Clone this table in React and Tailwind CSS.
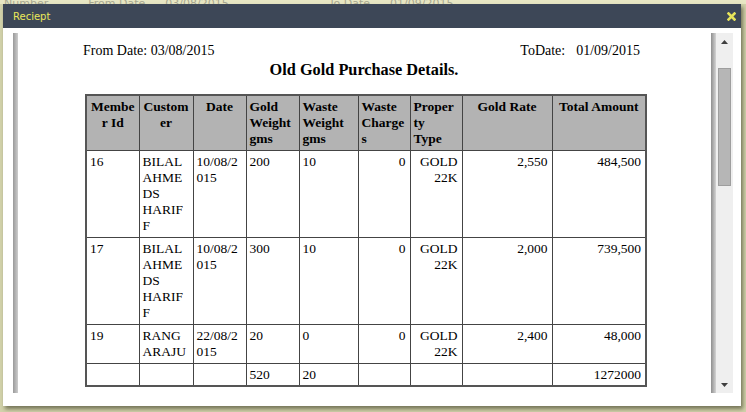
const headers = [
  { label: "Membe\nr Id", align: "text-center" },
  { label: "Custom\ner", align: "text-center" },
  { label: "Date", align: "text-center" },
  { label: "Gold\nWeight\ngms", align: "text-left" },
  { label: "Waste\nWeight\ngms", align: "text-left" },
  { label: "Waste\nCharge\ns", align: "text-left" },
  { label: "Proper\nty\nType", align: "text-left" },
  { label: "Gold Rate", align: "text-center" },
  { label: "Total Amount", align: "text-center" },
];

const colWidths = ["w-[53px]", "w-[54px]", "w-[53px]", "w-[53px]", "w-[59px]", "w-[52px]", "w-[52px]", "w-[90px]", "w-[94px]"];

const cellAlign = ["text-left", "text-left", "text-left", "text-left", "text-left", "text-right", "text-right", "text-right", "text-right"];

const rows = [
  ["16", "BILAL\nAHME\nDS\nHARIF\nF", "10/08/2\n015", "200", "10", "0", "GOLD\n22K", "2,550", "484,500"],
  ["17", "BILAL\nAHME\nDS\nHARIF\nF", "10/08/2\n015", "300", "10", "0", "GOLD\n22K", "2,000", "739,500"],
  ["19", "RANG\nARAJU", "22/08/2\n015", "20", "0", "0", "GOLD\n22K", "2,400", "48,000"],
  ["", "", "", "520", "20", "", "", "", "1272000"],
];

function Arrow({ down }) {
  return (
    <svg width="7" height="4" viewBox="0 0 7 4">
      <polygon points={down ? "0,0 7,0 3.5,4" : "0,4 7,4 3.5,0"} fill="#3f3f3f" />
    </svg>
  );
}

export default function App() {
  return (
    <div className="h-[412px] w-[746px] overflow-hidden bg-[#d2d2ab] font-['DejaVu_Sans',sans-serif]">
      {/* page behind the dialog, only a sliver shows */}
      <div className="flex h-[4px] items-end overflow-hidden bg-[#e8e7c4] text-[11px] leading-[12px] text-[#a8a890]">
        <span className="ml-[4px] mb-[-6px]">Number</span>
        <span className="ml-[40px] mb-[-6px]">From Date</span>
        <span className="ml-[20px] mb-[-6px]">03/08/2015</span>
        <span className="ml-[100px] mb-[-6px]">To Date</span>
        <span className="ml-[20px] mb-[-6px]">01/09/2015</span>
      </div>

      <div className="ml-[3px] h-[402px] w-[738px] bg-white shadow-[2px_3px_4px_rgba(40,40,20,0.55)]">
        <div className="flex h-[24px] items-center justify-between bg-[#3d4757] pl-[10px] pr-[5px]">
          <span className="text-[10px] text-[#ebe75a]">Reciept</span>
          <svg width="9" height="9" viewBox="0 0 9 9">
            <path d="M1.5 1.5 L7.5 7.5 M7.5 1.5 L1.5 7.5" stroke="#e6e35a" strokeWidth="2.6" strokeLinecap="square" />
          </svg>
        </div>

        <div className="pl-[10px] pt-[5px]">
          <div className="flex h-[360px] w-[720px] overflow-hidden">
            <div className="w-[5px] bg-gradient-to-r from-[#9a9a9a] to-[#cdcdcd]" />

            <div className="flex-1 overflow-hidden bg-white pl-[65px] pt-[10px] font-['Liberation_Serif',serif] text-black">
              <div className="w-[566px]">
                <div className="flex justify-between pr-[9px] text-[14px] leading-4">
                  <span>From Date: 03/08/2015</span>
                  <span>
                    ToDate:<span className="ml-[11px]">01/09/2015</span>
                  </span>
                </div>
                <h2 className="mt-[2px] pr-[4px] text-center text-[16.3px] font-bold leading-[18px]">Old Gold Purchase Details.</h2>

                <table className="mx-auto mt-[15px] w-[560px] table-fixed border-collapse border-2 border-[#555] text-[13.5px] leading-4">
                  <colgroup>
                    {colWidths.map((w, i) => (
                      <col key={i} className={w} />
                    ))}
                  </colgroup>
                  <thead>
                    <tr className="bg-[#b3b3b3]">
                      {headers.map((h) => (
                        <th
                          key={h.label}
                          className={`border border-[#444] px-[3px] py-[3px] align-top font-bold whitespace-pre-line ${h.align}`}
                        >
                          {h.label}
                        </th>
                      ))}
                    </tr>
                  </thead>
                  <tbody>
                    {rows.map((row, r) => (
                      <tr key={r}>
                        {row.map((cell, c) => (
                          <td
                            key={c}
                            className={`border border-[#444] pl-[3px] pr-[4px] pt-[3px] align-top whitespace-pre-line ${
                              r === rows.length - 1 ? "pb-[2px]" : "pb-[3px]"
                            } ${cellAlign[c]}`}
                          >
                            {cell}
                          </td>
                        ))}
                      </tr>
                    ))}
                  </tbody>
                </table>
              </div>
            </div>

            <div className="flex">
              <div className="w-[5px] bg-gradient-to-r from-[#8f8f8f] to-[#d4d4d4]" />
              <div className="flex w-[17px] flex-col bg-[#efefef]">
                <div className="flex h-[17px] items-center justify-center">
                  <Arrow />
                </div>
                <div className="mx-[2px] mt-[18px] h-[118px] border border-[#9e9e9e] bg-[#b6b6b6]" />
                <div className="flex-1" />
                <div className="flex h-[17px] items-center justify-center">
                  <Arrow down />
                </div>
              </div>
            </div>
          </div>
        </div>
      </div>
    </div>
  );
}
